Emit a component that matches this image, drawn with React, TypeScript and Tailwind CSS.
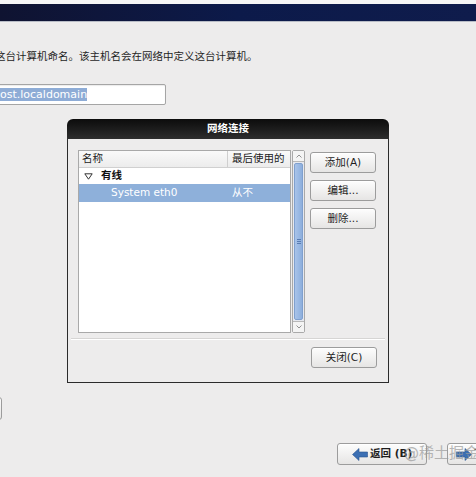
import React from "react";

const cjk = { fontFamily: '"DejaVu Sans", "Noto Sans CJK SC", sans-serif' };

function Btn({ children, className = "" }: { children: React.ReactNode; className?: string }) {
  return (
    <div
      className={`flex items-center justify-center rounded-[3px] border border-[#9c9c9c] bg-gradient-to-b from-[#fdfdfd] to-[#e6e5e4] text-[10.5px] text-[#1e1e1e] shadow-[inset_0_1px_0_#ffffff] ${className}`}
    >
      {children}
    </div>
  );
}

export default function App() {
  return (
    <div
      className="relative w-[476px] h-[477px] overflow-hidden bg-[#edecec] flex flex-col"
      style={cjk}
    >
      <div className="h-[4px] bg-[#f6f6f6] shrink-0" />
      <div className="h-[17px] shrink-0 bg-gradient-to-r from-[#0f1331] via-[#0c1a4a] to-[#0f1c4c]" />
      <div className="h-px shrink-0 bg-[#b8bcc6]" />

      <div className="mt-[27px] -ml-[5px] text-[10.5px] leading-[14px] text-[#1f1f1f] whitespace-nowrap">
        这台计算机命名。该主机名会在网络中定义这台计算机。
      </div>

      <div className="mt-[21px] -ml-[2px] w-[168px] h-[21px] shrink-0 rounded-[2px] border border-[#a5a5a5] bg-white flex items-center shadow-[inset_0_1px_1px_rgba(0,0,0,0.08)]">
        <span className="ml-[1px] bg-[#8eacd6] text-white text-[11px] leading-[13px] px-[0px] whitespace-nowrap">
          ost.localdomain
        </span>
      </div>

      {/* Dialog */}
      <div className="mt-[14px] ml-[67px] w-[322px] h-[264px] shrink-0 flex flex-col">
        <div className="h-[20px] shrink-0 rounded-t-[6px] bg-gradient-to-b from-[#0c0c0c] to-[#2e2e2e] flex items-center justify-center">
          <span className="text-[10.5px] font-bold text-white">网络连接</span>
        </div>
        <div className="flex-1 border-x border-b border-[#2b2b2b] bg-[#edecec] flex flex-col">
          <div className="flex mt-[11px] ml-[10px]">
            {/* list */}
            <div className="w-[213px] h-[183px] border border-[#a9a9a9] bg-white flex flex-col">
              <div className="h-[17px] flex border-b border-[#d0d0d0] bg-gradient-to-b from-[#fafafa] to-[#ececec] text-[10.5px] text-[#222]">
                <div className="w-[149px] border-r border-[#cfcfcf] pl-[3px] flex items-center">名称</div>
                <div className="flex-1 pl-[4px] flex items-center">最后使用的</div>
              </div>
              <div className="h-[16px] flex items-center text-[10.5px] text-[#111]">
                <svg width="9" height="7" viewBox="0 0 9 7" className="ml-[5px]">
                  <path d="M0.8 0.8 L8.2 0.8 L4.5 6.2 Z" fill="none" stroke="#333" strokeWidth="1" />
                </svg>
                <span className="ml-[8px] font-bold">有线</span>
              </div>
              <div className="h-[18px] flex items-center bg-[#8eb0da] text-[10.5px] text-white">
                <span className="ml-[32px] w-[118px]">System eth0</span>
                <span className="ml-[3px]">从不</span>
              </div>
            </div>
            {/* scrollbar */}
            <div className="ml-px w-[13px] h-[183px] border border-[#a9a9a9] rounded-[2px] bg-[#e6e8ee] flex flex-col">
              <div className="h-[11px] flex items-center justify-center border-b border-[#b8b8b8] bg-[#f4f4f4]">
                <svg width="6" height="4" viewBox="0 0 6 4">
                  <path d="M0.5 3.5 L3 1 L5.5 3.5" fill="none" stroke="#777" strokeWidth="0.8" />
                </svg>
              </div>
              <div className="flex-1 mx-[1px] my-[1px] rounded-[2px] border border-[#7fa0cf] bg-gradient-to-r from-[#a9c3e8] via-[#9ab9e4] to-[#8eafdc] flex items-center justify-center">
                <div className="flex flex-col gap-[1px]">
                  <div className="w-[4px] h-px bg-[#5a7db3]" />
                  <div className="w-[4px] h-px bg-[#5a7db3]" />
                  <div className="w-[4px] h-px bg-[#5a7db3]" />
                </div>
              </div>
              <div className="h-[11px] flex items-center justify-center border-t border-[#b8b8b8] bg-[#f4f4f4]">
                <svg width="6" height="4" viewBox="0 0 6 4">
                  <path d="M0.5 0.5 L3 3 L5.5 0.5" fill="none" stroke="#777" strokeWidth="0.8" />
                </svg>
              </div>
            </div>
            {/* buttons */}
            <div className="ml-[5px] mt-[2px] flex flex-col gap-[7px]">
              <Btn className="w-[66px] h-[21px]">添加(A)</Btn>
              <Btn className="w-[66px] h-[21px]">编辑...</Btn>
              <Btn className="w-[66px] h-[21px]">删除...</Btn>
            </div>
          </div>
          <div className="mt-[5px] mx-[3px] h-px bg-[#d6d5d4] shadow-[0_1px_0_#ffffff]" />
          <div className="mt-[8px] flex justify-end pr-[11px]">
            <Btn className="w-[66px] h-[21px]">关闭(C)</Btn>
          </div>
        </div>
      </div>

      {/* partial left button */}
      <div className="mt-[14px] -ml-[20px] w-[22px] h-[23px] shrink-0 rounded-[3px] border border-[#9c9c9c] bg-gradient-to-b from-[#fdfdfd] to-[#e6e5e4]" />

      {/* bottom nav */}
      <div className="mt-[23px] flex">
        <Btn className="ml-[337px] w-[90px] h-[22px] shrink-0 justify-start">
          <svg width="16" height="13" viewBox="0 0 16 13" className="ml-[14px]">
            <path d="M0.5 6.5 L7 0.5 L7 4 L15.5 4 L15.5 9 L7 9 L7 12.5 Z" fill="#3c6fb3" stroke="#2a548e" strokeWidth="0.6" />
          </svg>
          <span className="ml-[2px] font-bold">返回 (B)</span>
        </Btn>
        <Btn className="ml-[20px] w-[60px] h-[22px] shrink-0 justify-start">
          <svg width="16" height="13" viewBox="0 0 16 13" className="ml-[8px]">
            <path d="M15.5 6.5 L9 0.5 L9 4 L0.5 4 L0.5 9 L9 9 L9 12.5 Z" fill="#3c6fb3" stroke="#2a548e" strokeWidth="0.6" />
          </svg>
          <span className="ml-[2px] font-bold">下一步</span>
        </Btn>
      </div>

      {/* watermark */}
      <div className="absolute left-[404px] top-[444px] text-[15px] leading-[18px] text-[#9a9a9a] opacity-70 whitespace-nowrap">
        @稀土掘金技术社区
      </div>
    </div>
  );
}
